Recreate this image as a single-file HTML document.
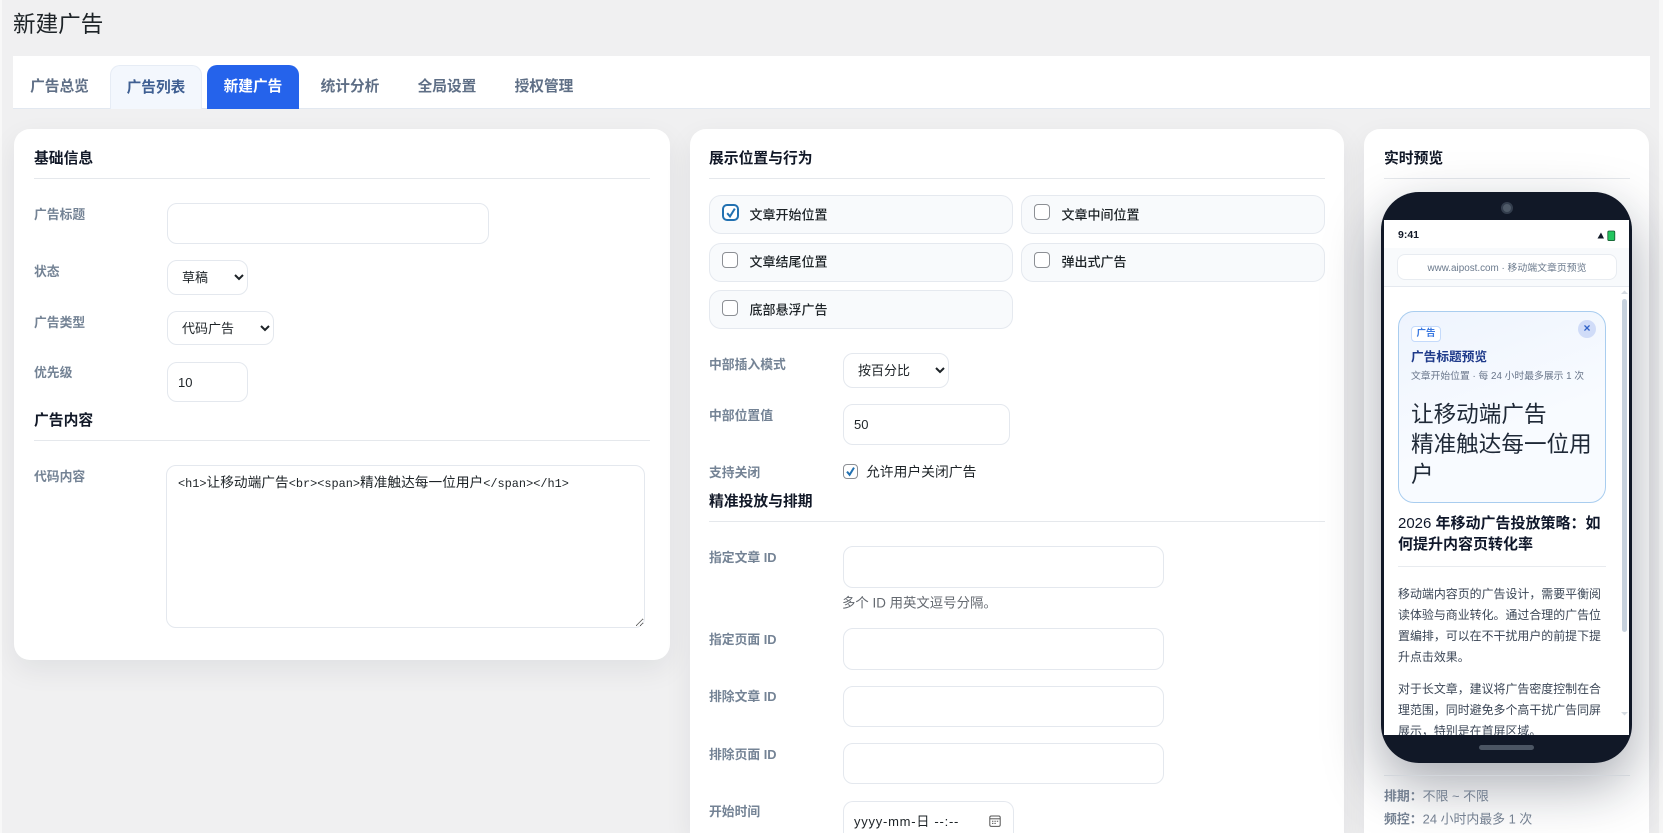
<!DOCTYPE html>
<html lang="zh-CN">
<head>
<meta charset="utf-8">
<title>新建广告</title>
<style>
html,body{margin:0;padding:0;width:1663px;height:833px;overflow:hidden;background:#f8f8f8}
body{position:relative;font-family:"Liberation Sans","Noto Sans CJK SC",sans-serif;color:#1d2327;font-size:13px}
*{box-sizing:border-box}
.a,input,select,textarea{position:absolute}
#root{position:absolute;left:0;top:0;width:1663px;height:833px;overflow:hidden}
#bg{left:2px;top:0;width:1657px;height:833px;background:#f0f0f1}
h1{position:absolute;left:13px;top:9px;margin:0;font-size:22.6px;line-height:32px;font-weight:400;color:#1d2327}
#tabs{left:13px;top:56px;width:1637px;height:53px;background:#fff;border-bottom:1px solid #e2e8f0}
.tab{position:absolute;top:65px;height:44px;width:92px;line-height:45px;text-align:center;font-size:14.7px;font-weight:700;color:#5f6f86;border-radius:10px 10px 0 0}
.t2{background:#f3f7fd;border:1px solid #e6ecf5;border-bottom:none;color:#3f5f92;line-height:44px}
.t3{background:#2563eb;color:#fff}
.card{position:absolute;background:#fff;border-radius:16px;box-shadow:0 10px 28px rgba(15,23,42,.07)}
.h{position:absolute;font-size:14.8px;line-height:20px;font-weight:700;color:#111827;white-space:nowrap;transform:translateY(1px)}
.hr{position:absolute;height:1px;background:#e5e8ec}
.l{position:absolute;font-size:12.8px;line-height:20px;font-weight:600;color:#748395;white-space:nowrap;transform:translateY(1px)}
input[type=text],select,textarea{background:#fff;border:1px solid #e4e8ee;border-radius:10px;margin:0;font-family:"Liberation Sans","Noto Sans CJK SC",sans-serif;font-size:13px;color:#1d2327;outline:none}
input[type=text]{padding:0 10px}
select{padding:0 8px 0 10px}
.chk{position:absolute;background:#f8fafc;border:1px solid #e5e9ef;border-radius:12px;height:39px;width:304px}
.cb{position:absolute;width:16px;height:16px;margin:0;appearance:none;-webkit-appearance:none;background:#fff;border:1px solid #8c8f94;border-radius:4px}
.tx{position:absolute;font-size:13px;line-height:20px;font-weight:500;color:#1d2327;white-space:nowrap;transform:translateY(.5px)}
.mono{position:absolute;left:178px;top:471px;white-space:nowrap;line-height:20px;font-family:"Liberation Mono","Noto Sans CJK SC",monospace;font-size:11.9px;color:#1d2327}
.mono b{font-weight:400;font-size:13.7px;font-family:"Noto Sans CJK SC",sans-serif}
#phone{left:1381px;top:192px;width:251px;height:571px;background:#111827;border-radius:38px;box-shadow:0 22px 56px rgba(15,23,42,.36)}
#screen{left:1384px;top:220px;width:245px;height:515px;background:#fff;overflow:hidden}
#screen .a{white-space:nowrap}
.p{position:absolute;left:14px;width:210px;font-size:11.95px;line-height:21.1px;color:#3b4656}
.m{position:absolute;left:1384px;font-size:12.9px;line-height:20px;color:#748091;white-space:nowrap;transform:translateY(.5px)}
.m b{font-weight:700}
</style>
</head>
<body>
<div id="root">
<div class="a" id="bg"></div>
<h1>新建广告</h1>

<div class="a" id="tabs"></div>
<div class="tab" style="left:13.5px">广告总览</div>
<div class="tab t2" style="left:110px">广告列表</div>
<div class="tab t3" style="left:207px">新建广告</div>
<div class="tab" style="left:304px">统计分析</div>
<div class="tab" style="left:401px">全局设置</div>
<div class="tab" style="left:498px">授权管理</div>

<!-- Left card -->
<div class="card" style="left:14px;top:129px;width:656px;height:531px"></div>
<div class="h" style="left:34px;top:148px">基础信息</div>
<div class="hr" style="left:34px;top:178px;width:616px"></div>
<div class="l" style="left:34px;top:204px">广告标题</div>
<input type="text" style="left:167px;top:203px;width:322px;height:41px">
<div class="l" style="left:34px;top:261px">状态</div>
<select style="left:167px;top:260px;width:81px;height:35px"><option>草稿</option></select>
<div class="l" style="left:34px;top:312px">广告类型</div>
<select style="left:167px;top:311px;width:107px;height:34px"><option>代码广告</option></select>
<div class="l" style="left:34px;top:362px">优先级</div>
<input type="text" value="10" style="left:167px;top:362px;width:81px;height:40px">
<div class="h" style="left:34px;top:410px">广告内容</div>
<div class="hr" style="left:34px;top:440px;width:616px"></div>
<div class="l" style="left:34px;top:466px">代码内容</div>
<textarea style="left:166px;top:465px;width:479px;height:163px"></textarea>
<div class="mono">&lt;h1&gt;<b>让移动端广告</b>&lt;br&gt;&lt;span&gt;<b>精准触达每一位用户</b>&lt;/span&gt;&lt;/h1&gt;</div>

<!-- Middle card -->
<div class="card" style="left:690px;top:129px;width:654px;height:704px;border-radius:16px 16px 0 0"></div>
<div class="h" style="left:709px;top:148px">展示位置与行为</div>
<div class="hr" style="left:709px;top:178px;width:616px"></div>

<div class="chk" style="left:709px;top:195px"></div>
<div class="chk" style="left:1021px;top:195px"></div>
<div class="chk" style="left:709px;top:243px"></div>
<div class="chk" style="left:1021px;top:243px"></div>
<div class="chk" style="left:709px;top:290px"></div>

<input class="cb" type="checkbox" checked style="left:722px;top:204px;border:2px solid #2271b1;border-radius:5px;width:17px;height:17px">
<svg class="a" style="left:722.5px;top:204.5px" width="16" height="16" viewBox="0 0 16 16"><path d="M4.2 8.2 7 11.4 11.8 3.6" fill="none" stroke="#2271b1" stroke-width="2"/></svg>
<input class="cb" type="checkbox" style="left:1034px;top:204px">
<input class="cb" type="checkbox" style="left:722px;top:252px">
<input class="cb" type="checkbox" style="left:1034px;top:252px">
<input class="cb" type="checkbox" style="left:722px;top:300px">

<div class="tx" style="left:749.5px;top:205px">文章开始位置</div>
<div class="tx" style="left:1061.5px;top:205px">文章中间位置</div>
<div class="tx" style="left:749.5px;top:252px">文章结尾位置</div>
<div class="tx" style="left:1061.5px;top:252px">弹出式广告</div>
<div class="tx" style="left:749.5px;top:300px">底部悬浮广告</div>

<div class="l" style="left:709px;top:354px">中部插入模式</div>
<select style="left:843px;top:353px;width:106px;height:35px"><option>按百分比</option></select>
<div class="l" style="left:709px;top:405px">中部位置值</div>
<input type="text" value="50" style="left:843px;top:404px;width:167px;height:41px">
<div class="l" style="left:709px;top:462px">支持关闭</div>
<input class="cb" type="checkbox" checked style="left:843px;top:464px;width:15px;height:15px">
<svg class="a" style="left:843px;top:464px" width="15" height="15" viewBox="0 0 15 15"><path d="M4 7.6 6.6 10.8 11 3.6" fill="none" stroke="#2271b1" stroke-width="2"/></svg>
<div class="tx" style="left:866px;top:461.5px;font-size:13.8px;font-weight:400">允许用户关闭广告</div>

<div class="h" style="left:709px;top:491px">精准投放与排期</div>
<div class="hr" style="left:709px;top:521px;width:616px"></div>
<div class="l" style="left:709px;top:547px">指定文章 ID</div>
<input type="text" style="left:843px;top:546px;width:321px;height:42px">
<div class="tx" style="left:842px;top:592.5px;font-size:13.4px;font-weight:400;color:#646970">多个 ID 用英文逗号分隔。</div>
<div class="l" style="left:709px;top:629px">指定页面 ID</div>
<input type="text" style="left:843px;top:628px;width:321px;height:42px">
<div class="l" style="left:709px;top:686px">排除文章 ID</div>
<input type="text" style="left:843px;top:686px;width:321px;height:41px">
<div class="l" style="left:709px;top:744px">排除页面 ID</div>
<input type="text" style="left:843px;top:743px;width:321px;height:41px">
<div class="l" style="left:709px;top:801px">开始时间</div>
<input type="text" value="yyyy-mm-日 --:--" style="left:843px;top:801px;width:171px;height:32px;padding:5px 10px 0;border-bottom:none;border-radius:10px 10px 0 0;letter-spacing:.75px">
<svg class="a" style="left:989px;top:815px" width="12" height="12" viewBox="0 0 12 12" fill="none" stroke="#555" stroke-width="1"><rect x=".8" y="1" width="10.4" height="10.4" rx="1.5"/><path d="M.8 3.8H11.2"/><path d="M3 6.2H4.4M5.4 6.2H6.8M7.8 6.2H9.2M3 8.4H4.4M5.4 8.4H6.8"/></svg>

<!-- Right card -->
<div class="card" style="left:1364px;top:129px;width:285px;height:704px;border-radius:16px 16px 0 0"></div>
<div class="h" style="left:1384px;top:148px">实时预览</div>
<div class="hr" style="left:1384px;top:178px;width:246px"></div>

<div class="a" id="phone"></div>
<div class="a" style="left:1501px;top:202px;width:12px;height:12px;border-radius:50%;background:#4f5a68;border:2px solid #333d4d"></div>
<div class="a" id="screen">
  <div class="a" style="left:14px;top:7px;font-size:10.5px;line-height:16px;font-weight:700;color:#111827">9:41</div>
  <svg class="a" style="left:212px;top:10px" width="22" height="12" viewBox="0 0 22 12"><path d="M1.5 8.5 5 2.5 8 8.5Z" fill="#111827"/><rect x="11.8" y="1" width="7" height="9.6" rx="1.2" fill="#22c55e" stroke="#14532d" stroke-width=".8"/></svg>
  <div class="a" style="left:0;top:28px;width:245px;height:39px;background:#f8fafc;border-bottom:1px solid #e5e9ef"></div>
  <div class="a" style="left:13px;top:34px;width:220px;height:26px;background:#fff;border:1px solid #e8ecf1;border-radius:8px;text-align:center;font-size:9.9px;line-height:27px;color:#6b7a8d">www.aipost.com · 移动端文章页预览</div>

  <div class="a" style="left:14px;top:91px;width:208px;height:192px;border:1px solid #a9cdef;border-radius:16px;background:linear-gradient(160deg,#eef4fe,#f8fbff 60%)"></div>
  <div class="a" style="left:194px;top:100px;width:18px;height:18px;border-radius:50%;background:#d0dcf8;color:#2f62c8;text-align:center;font-size:12px;line-height:17px;font-weight:700">×</div>
  <div class="a" style="left:27px;top:106px;width:30px;height:16px;border:1px solid #c4dafb;border-radius:4px;background:#fff;color:#3a78e0;text-align:center;font-size:9.5px;line-height:14px;font-weight:700">广告</div>
  <div class="a" style="left:27px;top:127px;font-size:12.7px;line-height:20px;font-weight:700;color:#1e3a8a">广告标题预览</div>
  <div class="a" style="left:27px;top:149px;font-size:9.8px;line-height:16px;color:#68758a">文章开始位置 · 每 24 小时最多展示 1 次</div>
  <div class="a" style="left:27px;top:180px;font-size:22.6px;line-height:30px;color:#1f2937">让移动端广告<br>精准触达每一位用<br>户</div>

  <div class="a" style="left:14px;top:293px;font-size:15px;line-height:21px;font-weight:700;color:#0f172a"><span style="font-weight:400">2026</span> 年移动广告投放策略：如<br>何提升内容页转化率</div>
  <div class="a" style="left:14px;top:346px;width:208px;height:1px;background:#e8ebef"></div>
  <div class="p" style="top:364px;white-space:normal">移动端内容页的广告设计，需要平衡阅<br>读体验与商业转化。通过合理的广告位<br>置编排，可以在不干扰用户的前提下提<br>升点击效果。</div>
  <div class="p" style="top:459px;white-space:normal">对于长文章，建议将广告密度控制在合<br>理范围，同时避免多个高干扰广告同屏<br>展示，特别是在首屏区域。</div>

  <div class="a" style="left:238px;top:79px;width:5px;height:333px;border-radius:3px;background:#c6d1dd"></div>
  <svg class="a" style="left:237px;top:70px" width="7" height="5" viewBox="0 0 7 5"><path d="M0 4 3.5 .5 7 4Z" fill="#d5dbe2"/></svg>
  <svg class="a" style="left:237px;top:491px" width="7" height="5" viewBox="0 0 7 5"><path d="M0 1 3.5 4.5 7 1Z" fill="#d5dbe2"/></svg>
</div>
<div class="a" style="left:1479px;top:745px;width:55px;height:5px;border-radius:3px;background:#4b5563"></div>

<div class="hr" style="left:1384px;top:775px;width:246px;background:#d2d6db"></div>
<div class="m" style="top:786px"><b>排期：</b>不限 ~ 不限</div>
<div class="m" style="top:809px"><b>频控：</b>24 小时内最多 1 次</div>
</div>
</body>
</html>
